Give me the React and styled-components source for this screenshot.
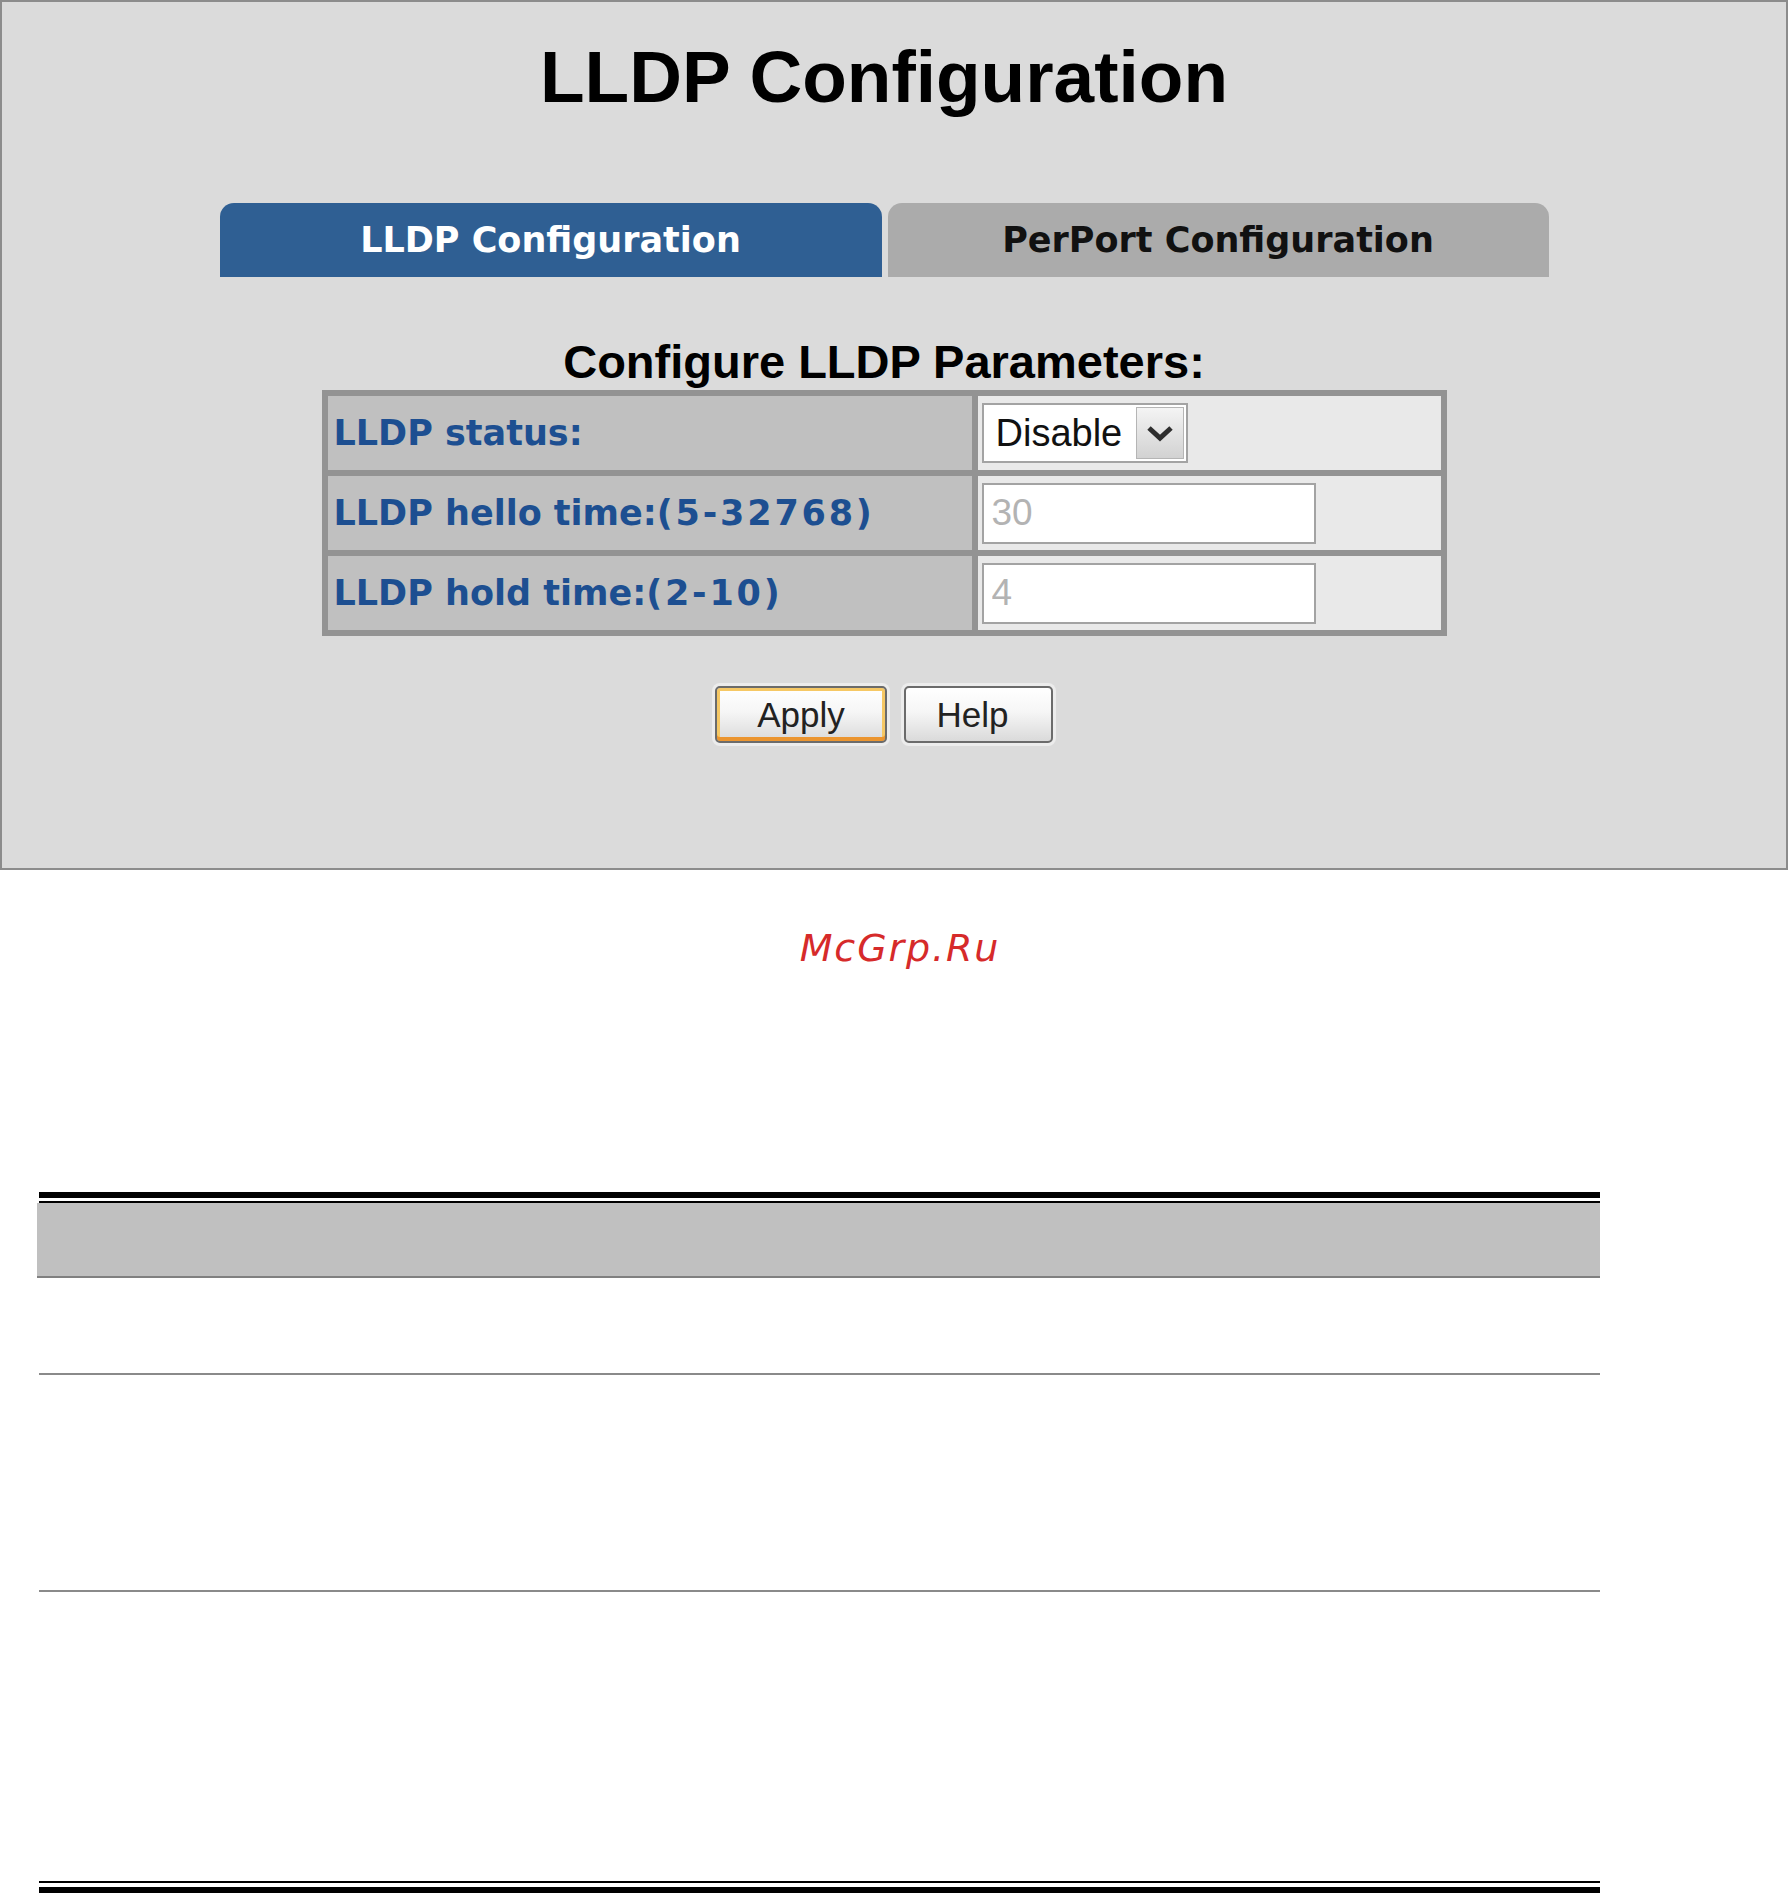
import React from "react";
import styled, { createGlobalStyle } from "styled-components";

const GlobalStyle = createGlobalStyle`
    html, body {
        margin: 0;
        padding: 0;
        background: #ffffff;
    }
    body {
        font-family: "Liberation Sans", Arial, sans-serif;
    }
`

const Page = styled.div`
    width: 1788px;
    height: 1893px;
    overflow: hidden;
`

const Panel = styled.div`
    box-sizing: border-box;
    width: 1788px;
    height: 870px;
    padding: 38px 20px 0 0;
    background: #dbdbdb;
    border: 2px solid #8c8c8c;
`

const Title = styled.h1`
    margin: 0;
    font-family: "Liberation Sans", Arial, sans-serif;
    font-size: 73px;
    line-height: 73px;
    font-weight: bold;
    text-align: center;
    color: #000;
`

const TabRow = styled.div`
    display: flex;
    justify-content: center;
    gap: 6px;
    margin-top: 90px;
`

const Tab = styled.div`
    width: ${(p) => p.$width}px;
    height: 74px;
    display: flex;
    align-items: center;
    justify-content: center;
    border-radius: 14px 14px 0 0;
    background: ${(p) => (p.$active ? "#2f5f93" : "#ababab")};
    color: ${(p) => (p.$active ? "#ffffff" : "#111111")};
    font-family: "DejaVu Sans", Verdana, sans-serif;
    font-weight: bold;
    font-size: 35px;
    line-height: 1;
`

const SectionTitle = styled.h2`
    margin: 61px 0 0;
    font-family: "Liberation Sans", Arial, sans-serif;
    font-size: 47px;
    line-height: 47px;
    font-weight: bold;
    text-align: center;
    color: #000;
`

const ParamGrid = styled.div`
    display: grid;
    grid-template-columns: 644px 463px;
    grid-auto-rows: 74px;
    gap: 6px;
    padding: 6px;
    width: max-content;
    margin: 5px auto 0;
    background: #939393;
`

const LabelCell = styled.div`
    display: flex;
    align-items: center;
    padding-left: 6px;
    background: #c0c0c0;
    color: #1d4f91;
    font-family: "DejaVu Sans", Verdana, sans-serif;
    font-weight: bold;
    font-size: 35px;
    white-space: pre;
`

const Range = styled.span`
    letter-spacing: 2.8px;
`

const ValueCell = styled.div`
    display: flex;
    align-items: center;
    padding-left: 4px;
    background: #e9e9e9;
`

const SelectBox = styled.div`
    box-sizing: border-box;
    width: 206px;
    height: 60px;
    display: flex;
    align-items: stretch;
    background: #fff;
    border: 2px solid #a3a3a3;
`

const SelectText = styled.span`
    flex: 1;
    display: flex;
    align-items: center;
    padding-left: 12px;
    font-family: "Liberation Sans", Arial, sans-serif;
    font-size: 38px;
    color: #111;
`

const SelectArrow = styled.span`
    width: 46px;
    display: flex;
    align-items: center;
    justify-content: center;
    margin: 2px 2px 2px 0;
    border: 1px solid #b5b5b5;
    background: linear-gradient(#f4f4f4, #d2d2d2);
`

const TextField = styled.input`
    box-sizing: border-box;
    width: 334px;
    height: 61px;
    padding: 0 0 0 8px;
    border: 2px solid #a3a3a3;
    background: #fff;
    font-family: "Liberation Sans", Arial, sans-serif;
    font-size: 37px;
    color: #b3b3b3;
    outline: none;
`

const ButtonRow = styled.div`
    display: flex;
    justify-content: center;
    gap: 17px;
    margin-top: 50px;
`

const Button = styled.button`
    box-sizing: border-box;
    width: ${(p) => p.$width}px;
    height: 57px;
    padding: 0 ${(p) => p.$shift || 0}px 0 0;
    border: 2px solid #6b6b6b;
    border-radius: 5px;
    background: linear-gradient(#ffffff 0%, #f6f6f6 45%, #dadada 100%);
    box-shadow: 0 0 0 3px #ececec
        ${(p) => (p.$focus ? ", inset 0 -4px 0 #eb9530, inset 0 0 0 3px #f6c865" : "")};
    font-family: "Liberation Sans", Arial, sans-serif;
    font-size: 35px;
    color: #222;
`

const Watermark = styled.div`
    margin-top: 59px;
    padding-left: 12px;
    text-align: center;
    font-family: "DejaVu Sans", Verdana, sans-serif;
    font-style: italic;
    font-size: 38px;
    line-height: 38px;
    letter-spacing: 1.9px;
    color: #d62a2a;
`

const DocTable = styled.div`
    width: 1561px;
    margin: 225px 0 0 39px;
`

const TopRule = styled.div`
    height: 3px;
    border-top: 6px solid #000;
    border-bottom: 2px solid #000;
`

const HeaderRow = styled.div`
    height: 73px;
    margin-left: -2px;
    background: #c0c0c0;
    border-bottom: 2px solid #808080;
`

const BodyRow = styled.div`
    height: ${(p) => p.$height}px;
    border-bottom: ${(p) => (p.$last ? "none" : "2px solid #8a8a8a")};
`

const BottomRule = styled.div`
    height: 4px;
    border-top: 2px solid #000;
    border-bottom: 6px solid #000;
`

const Chevron = () => (
    <svg width="28" height="20" viewBox="0 0 28 20">
        <path d="M3 5 L14 15 L25 5" fill="none" stroke="#2e2e2e" strokeWidth="5" />
    </svg>
)

const params = [
    { label: "LLDP hello time:", range: "(5-32768)", value: "30" },
    { label: "LLDP hold time:", range: "(2-10)", value: "4" },
]

const App = () => {
    return (
        <Page>
            <GlobalStyle />
            <Panel>
                <Title>LLDP Configuration</Title>
                <TabRow>
                    <Tab $active $width={662}>LLDP Configuration</Tab>
                    <Tab $width={661}>PerPort Configuration</Tab>
                </TabRow>

                <SectionTitle>Configure LLDP Parameters:</SectionTitle>
                <ParamGrid>
                    <LabelCell>LLDP status:</LabelCell>
                    <ValueCell>
                        <SelectBox>
                            <SelectText>Disable</SelectText>
                            <SelectArrow>
                                <Chevron />
                            </SelectArrow>
                        </SelectBox>
                    </ValueCell>
                    {params.map((p) => (
                        <React.Fragment key={p.label}>
                            <LabelCell>
                                {p.label}
                                <Range>{p.range}</Range>
                            </LabelCell>
                            <ValueCell>
                                <TextField defaultValue={p.value} readOnly />
                            </ValueCell>
                        </React.Fragment>
                    ))}
                </ParamGrid>

                <ButtonRow>
                    <Button $focus $width={172}>Apply</Button>
                    <Button $width={149} $shift={12}>Help</Button>
                </ButtonRow>
            </Panel>

            <Watermark>McGrp.Ru</Watermark>

            <DocTable>
                <TopRule />
                <HeaderRow />
                <BodyRow $height={95} />
                <BodyRow $height={215} />
                <BodyRow $height={289} $last />
                <BottomRule />
            </DocTable>
        </Page>
    )
}

export default App
